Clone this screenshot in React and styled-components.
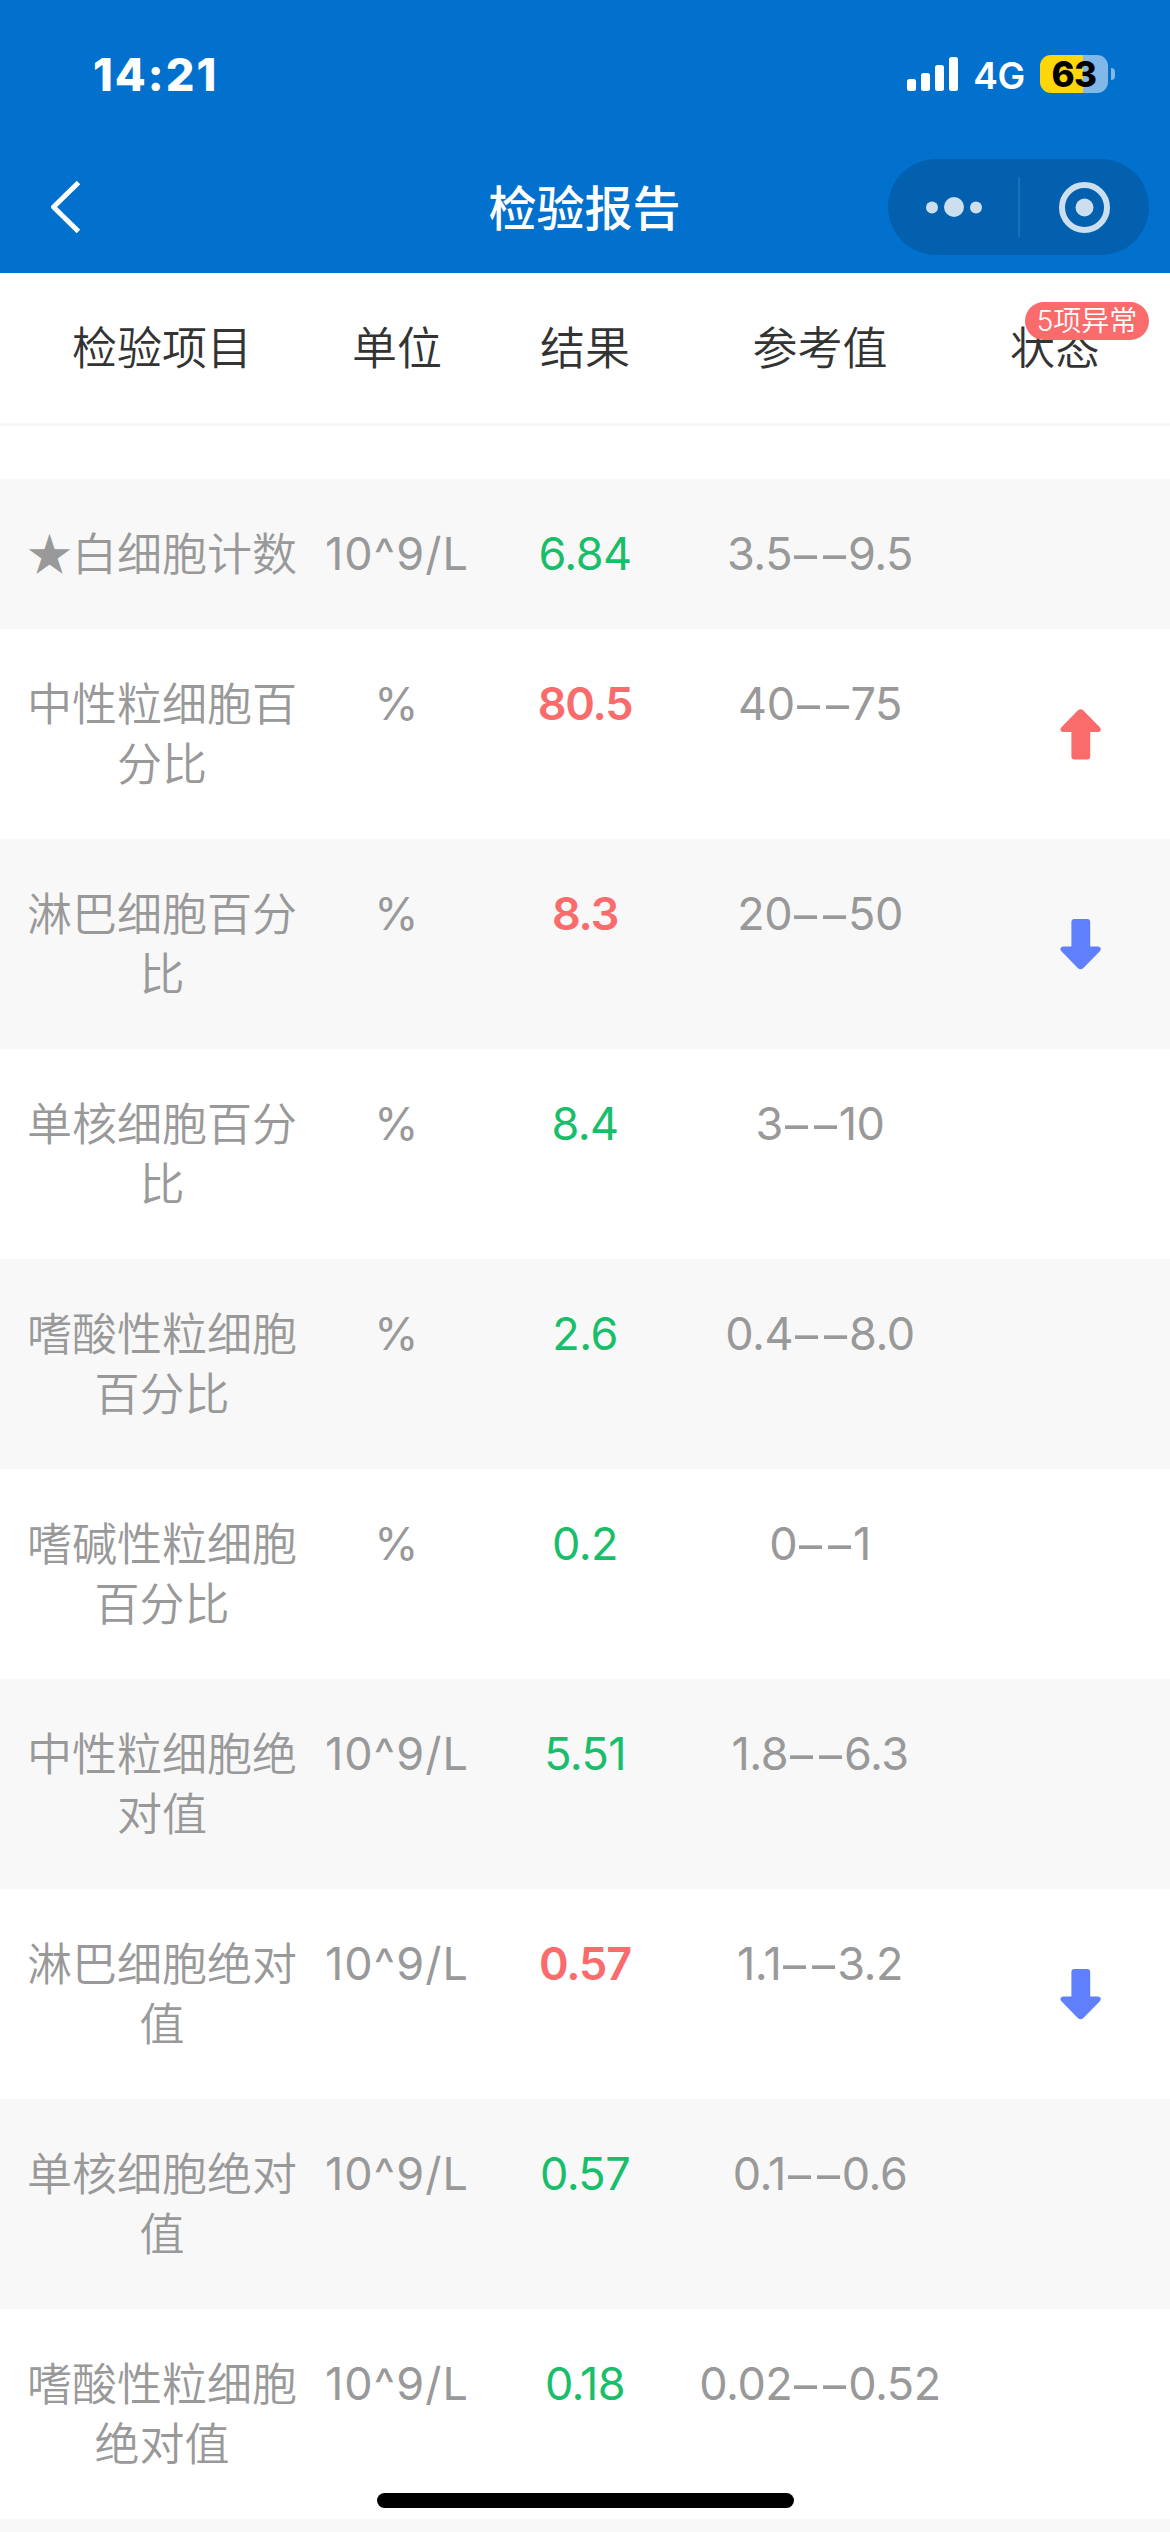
import styled, { createGlobalStyle } from "styled-components";

const GlobalStyle = createGlobalStyle`
  * {
    box-sizing: border-box;
  }
  body {
    margin: 0;
    background: #fff;
    font-family: Inter, "Noto Sans CJK SC", sans-serif;
  }
`

let Page = styled.div`
  position: relative;
  width: 1170px;
  height: 2532px;
  overflow: hidden;
  background: #fff;
`
let TopArea = styled.header`
  height: 273px;
  background: #0271ce;
  color: #fff;
`
let StatusBar = styled.div`
  display: flex;
  align-items: center;
  height: 141px;
  padding: 7px 55px 0 93px;
`
let Time = styled.div`
  flex: 1;
  font-size: 45px;
  font-weight: 800;
  letter-spacing: 2px;
`
let Network = styled.div`
  margin: 3px 15px 0 14px;
  font-size: 37px;
  font-weight: 600;
  letter-spacing: -0.3px;
`
let Battery = styled.div`
  display: flex;
  align-items: center;
  justify-content: center;
  width: 68px;
  height: 38px;
  border-radius: 11px;
  background: linear-gradient(to right, #ffd60a 63%, #81b8e7 63%);
  color: #000;
  font-size: 35px;
  font-weight: 800;
  letter-spacing: -0.5px;
`
let BatteryTip = styled.div`
  width: 4px;
  height: 12px;
  margin-left: 3px;
  border-radius: 0 6px 6px 0;
  background: #81b8e7;
`
let NavBar = styled.div`
  display: grid;
  grid-template-columns: 1fr 192px 1fr;
  align-items: center;
  height: 132px;
  padding: 0 21px 0 48px;
`
let NavTitle = styled.h1`
  margin: 3px 0 0 -14px;
  font-size: 48px;
  font-weight: 500;
  line-height: 60px;
  white-space: nowrap;
`
let Capsule = styled.div`
  display: flex;
  align-items: center;
  justify-self: end;
  width: 261px;
  height: 96px;
  border-radius: 48px;
  background: #0260ae;
`
let CapsuleButton = styled.button`
  display: flex;
  flex: 1;
  align-items: center;
  justify-content: center;
  padding: 0;
  border: none;
  background: none;
`
let CapsuleLine = styled.div`
  width: 2px;
  height: 60px;
  background: #1b70b6;
`
let Row = styled.div`
  display: grid;
  grid-template-columns: 282px 188px 188px 282px 188px;
  padding: 45px 21px;
  background: ${ props => props.$gray ? '#f8f8f8' : '#fff' };
`
let HeadRow = styled(Row)`
  position: relative;
  height: 153px;
  margin-bottom: 53px;
  border-bottom: 3px solid #f8f8f8;
`
let Cell = styled.div`
  color: #999;
  font-size: 45px;
  font-weight: 400;
  line-height: 60px;
  text-align: center;
  white-space: nowrap;
`
let Head = styled(Cell)`
  padding-top: 1px;
  color: #333;
  font-weight: 350;
`
let Name = styled(Cell)`
  margin: -2px 0 2px;
  font-family: "Noto Sans CJK SC", sans-serif;
  font-weight: 350;
  white-space: normal;
`
let Unit = styled(Cell)`
  letter-spacing: 1.1px;
`
let Result = styled(Cell)`
  color: ${ props => props.$bad ? '#fa6b6c' : '#19be6b' };
  font-weight: ${ props => props.$bad ? 600 : 400 };
  letter-spacing: ${ props => props.$bad ? '-1.2px' : '-0.6px' };
`
let Range = styled(Cell)`
  letter-spacing: -0.5px;
`
// 参考值中间的横线比数字宽一些
let Dash = styled.span`
  display: inline-block;
  width: 56px;
  letter-spacing: -2.5px;
  transform: translate(-2px, 1px) scaleX(1.6);
`
let Badge = styled.div`
  position: absolute;
  top: 29px;
  right: 21px;
  width: 124px;
  height: 38px;
  border-radius: 19px;
  background: #fa6b6c;
  color: #fff;
  font-size: 28px;
  font-weight: 350;
  line-height: 39px;
  text-align: center;
`
let ArrowBox = styled.div`
  display: flex;
  justify-content: center;
  height: 51px;
  margin-top: 35px;
  margin-bottom: -26px;
  padding-left: 51px;
`
let HomeBar = styled.div`
  position: absolute;
  left: 377px;
  bottom: 24px;
  width: 417px;
  height: 15px;
  border-radius: 8px;
  background: #000;
`

const heads = ['检验项目', '单位', '结果', '参考值', '状态']

const items = [
  { name: '★白细胞计数', unit: '10^9/L', result: '6.84', range: ['3.5', '9.5'] },
  { name: '中性粒细胞百分比', unit: '%', result: '80.5', range: ['40', '75'], state: 'up' },
  { name: '淋巴细胞百分比', unit: '%', result: '8.3', range: ['20', '50'], state: 'down' },
  { name: '单核细胞百分比', unit: '%', result: '8.4', range: ['3', '10'] },
  { name: '嗜酸性粒细胞百分比', unit: '%', result: '2.6', range: ['0.4', '8.0'] },
  { name: '嗜碱性粒细胞百分比', unit: '%', result: '0.2', range: ['0', '1'] },
  { name: '中性粒细胞绝对值', unit: '10^9/L', result: '5.51', range: ['1.8', '6.3'] },
  { name: '淋巴细胞绝对值', unit: '10^9/L', result: '0.57', range: ['1.1', '3.2'], state: 'down' },
  { name: '单核细胞绝对值', unit: '10^9/L', result: '0.57', range: ['0.1', '0.6'] },
  { name: '嗜酸性粒细胞绝对值', unit: '10^9/L', result: '0.18', range: ['0.02', '0.52'] },
]

function Signal() {
  return (
    <svg width="52" height="34" viewBox="0 0 52 34" fill="#fff">
      <rect x="0" y="22" width="9" height="12" rx="2.5" />
      <rect x="14" y="16" width="9" height="18" rx="2.5" />
      <rect x="28" y="8" width="9" height="26" rx="2.5" />
      <rect x="42" y="0" width="9" height="34" rx="2.5" />
    </svg>
  )
}

function Arrow({ state }) {
  return (
    <svg width="42" height="51" viewBox="0 0 42 51">
      <path
        d="M17.8 1.5 Q20.6 -1.2 23.4 1.5 L39.8 18.3 Q41.2 20 40.6 21.4 Q39.8 22.9 38 22.9 H30.2 V47.5 Q30.2 50.5 27.2 50.5 H14.4 Q11.4 50.5 11.4 47.5 V22.9 H3.2 Q1.4 22.9 0.6 21.4 Q0 20 1.4 18.3 Z"
        fill={state == 'up' ? '#fa6b6c' : '#5f80fa'}
        transform={state == 'up' ? undefined : 'matrix(1 0 0 -1 0 50.5)'}
      />
    </svg>
  )
}

function Item({ item, gray }) {
  return (
    <Row $gray={gray}>
      <Name>{item.name}</Name>
      <Unit>{item.unit}</Unit>
      <Result $bad={item.state}>{item.result}</Result>
      <Range>{item.range[0]}<Dash>--</Dash>{item.range[1]}</Range>
      {item.state && <ArrowBox><Arrow state={item.state} /></ArrowBox>}
    </Row>
  )
}

function App() {
  return (
    <Page>
      <GlobalStyle />
      <TopArea>
        <StatusBar>
          <Time>14:21</Time>
          <Signal />
          <Network>4G</Network>
          <Battery>63</Battery>
          <BatteryTip />
        </StatusBar>
        <NavBar>
          <svg width="34" height="56" viewBox="0 0 34 56" fill="none" stroke="#fff" strokeWidth="5">
            <path d="M30.5 3.5 L5.5 28 L30.5 52.5" strokeLinejoin="round" />
          </svg>
          <NavTitle>检验报告</NavTitle>
          <Capsule>
            <CapsuleButton>
              <svg width="59" height="20" viewBox="-3 0 59 20" fill="#cddfef">
                <circle cx="6" cy="10.5" r="6" />
                <circle cx="28" cy="10" r="10" />
                <circle cx="50" cy="10.5" r="6" />
              </svg>
            </CapsuleButton>
            <CapsuleLine />
            <CapsuleButton>
              <svg width="51" height="51" viewBox="0 0 51 51" fill="#cddfef">
                <circle cx="25.5" cy="25.5" r="22.5" fill="none" stroke="#cddfef" strokeWidth="6" />
                <circle cx="25.5" cy="25.5" r="9" />
              </svg>
            </CapsuleButton>
          </Capsule>
        </NavBar>
      </TopArea>
      <HeadRow>
        {heads.map((head) => <Head key={head}>{head}</Head>)}
        <Badge>5项异常</Badge>
      </HeadRow>
      {items.map((item, i) => <Item key={item.name} item={item} gray={i % 2 == 0} />)}
      <Row $gray />
      <HomeBar />
    </Page>
  );
}

export default App;
